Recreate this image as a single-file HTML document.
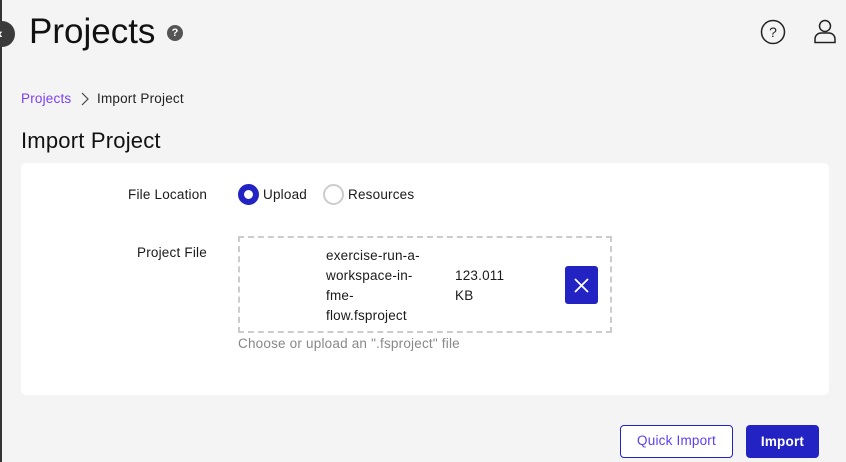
<!DOCTYPE html>
<html><head><style>
*{box-sizing:border-box;margin:0;padding:0}
body{width:846px;height:462px;background:#f4f4f4;font-family:"Liberation Sans",sans-serif;color:#1a1a1a;position:relative;overflow:hidden}
.abs{position:absolute}
.t{font-size:13.5px;letter-spacing:0.2px}
</style></head><body>
<div class="abs" style="left:0;top:0;width:2px;height:462px;background:#333"></div>
<div class="abs" style="left:-11px;top:21px;width:26px;height:26px;border-radius:50%;background:#3a3a3a"></div>
<div class="abs" style="left:-2px;top:25px;color:#fff;font-size:14px;font-weight:bold">‹</div>
<div class="abs" style="left:29px;top:12px;font-size:35px;color:#111">Projects</div>
<div class="abs" style="left:167px;top:25px;width:16px;height:16px;border-radius:50%;background:#555;color:#fff;font-size:11px;font-weight:bold;text-align:center;line-height:16px">?</div>
<svg class="abs" style="left:760px;top:19px" width="26" height="26" viewBox="0 0 26 26"><circle cx="13" cy="13" r="11.5" fill="none" stroke="#222" stroke-width="1.5"/><text x="13" y="18" font-size="14" text-anchor="middle" font-family="Liberation Sans" fill="#222">?</text></svg>
<svg class="abs" style="left:813px;top:18px" width="24" height="26" viewBox="0 0 24 26"><circle cx="12" cy="8" r="5.5" fill="none" stroke="#222" stroke-width="1.5"/><path d="M2 24.5V21a6 6 0 0 1 6-6h8a6 6 0 0 1 6 6v3.5z" fill="none" stroke="#222" stroke-width="1.5"/></svg>
<div class="abs t" style="left:21px;top:91px;color:#7b3ff2">Projects</div>
<svg class="abs" style="left:80px;top:92px" width="10" height="14"><path d="M2 1l6 6-6 6" fill="none" stroke="#444" stroke-width="1.2"/></svg>
<div class="abs t" style="left:97px;top:91px;color:#222">Import Project</div>
<div class="abs" style="left:21px;top:128px;font-size:22px;letter-spacing:0.2px;color:#111">Import Project</div>
<div class="abs" style="left:21px;top:163px;width:808px;height:232px;background:#fff;border-radius:5px"></div>
<div class="abs t" style="left:128px;top:187px">File Location</div>
<div class="abs" style="left:238px;top:184px;width:21px;height:21px;border-radius:50%;border:6px solid #2323c4;background:#fff"></div>
<div class="abs t" style="left:263px;top:187px">Upload</div>
<div class="abs" style="left:323px;top:184px;width:21px;height:21px;border-radius:50%;border:2px solid #ccc"></div>
<div class="abs t" style="left:348px;top:187px">Resources</div>
<div class="abs t" style="left:137px;top:245px">Project File</div>
<div class="abs" style="left:238px;top:236px;width:374px;height:97px;border:2px dashed #ccc"></div>
<div class="abs t" style="left:326px;top:246px;line-height:20px">exercise-run-a-<br>workspace-in-<br>fme-<br>flow.fsproject</div>
<div class="abs t" style="left:455px;top:266px;line-height:20px">123.011<br>KB</div>
<div class="abs" style="left:565px;top:266px;width:33px;height:38px;background:#2323c4;border-radius:3px"></div>
<svg class="abs" style="left:573px;top:277px" width="17" height="17"><path d="M2 2l13 13M15 2L2 15" stroke="#fff" stroke-width="1.8"/></svg>
<div class="abs t" style="left:238px;top:336px;color:#888">Choose or upload an ".fsproject" file</div>
<div class="abs t" style="left:620px;top:425px;width:113px;height:33px;border:1.5px solid #2323c4;border-radius:4px;background:#fff;color:#5b3ff2;text-align:center;line-height:30px">Quick Import</div>
<div class="abs t" style="left:746px;top:425px;width:73px;height:33px;background:#2323c4;border-radius:4px;color:#fff;font-weight:bold;text-align:center;line-height:33px">Import</div>
</body></html>
